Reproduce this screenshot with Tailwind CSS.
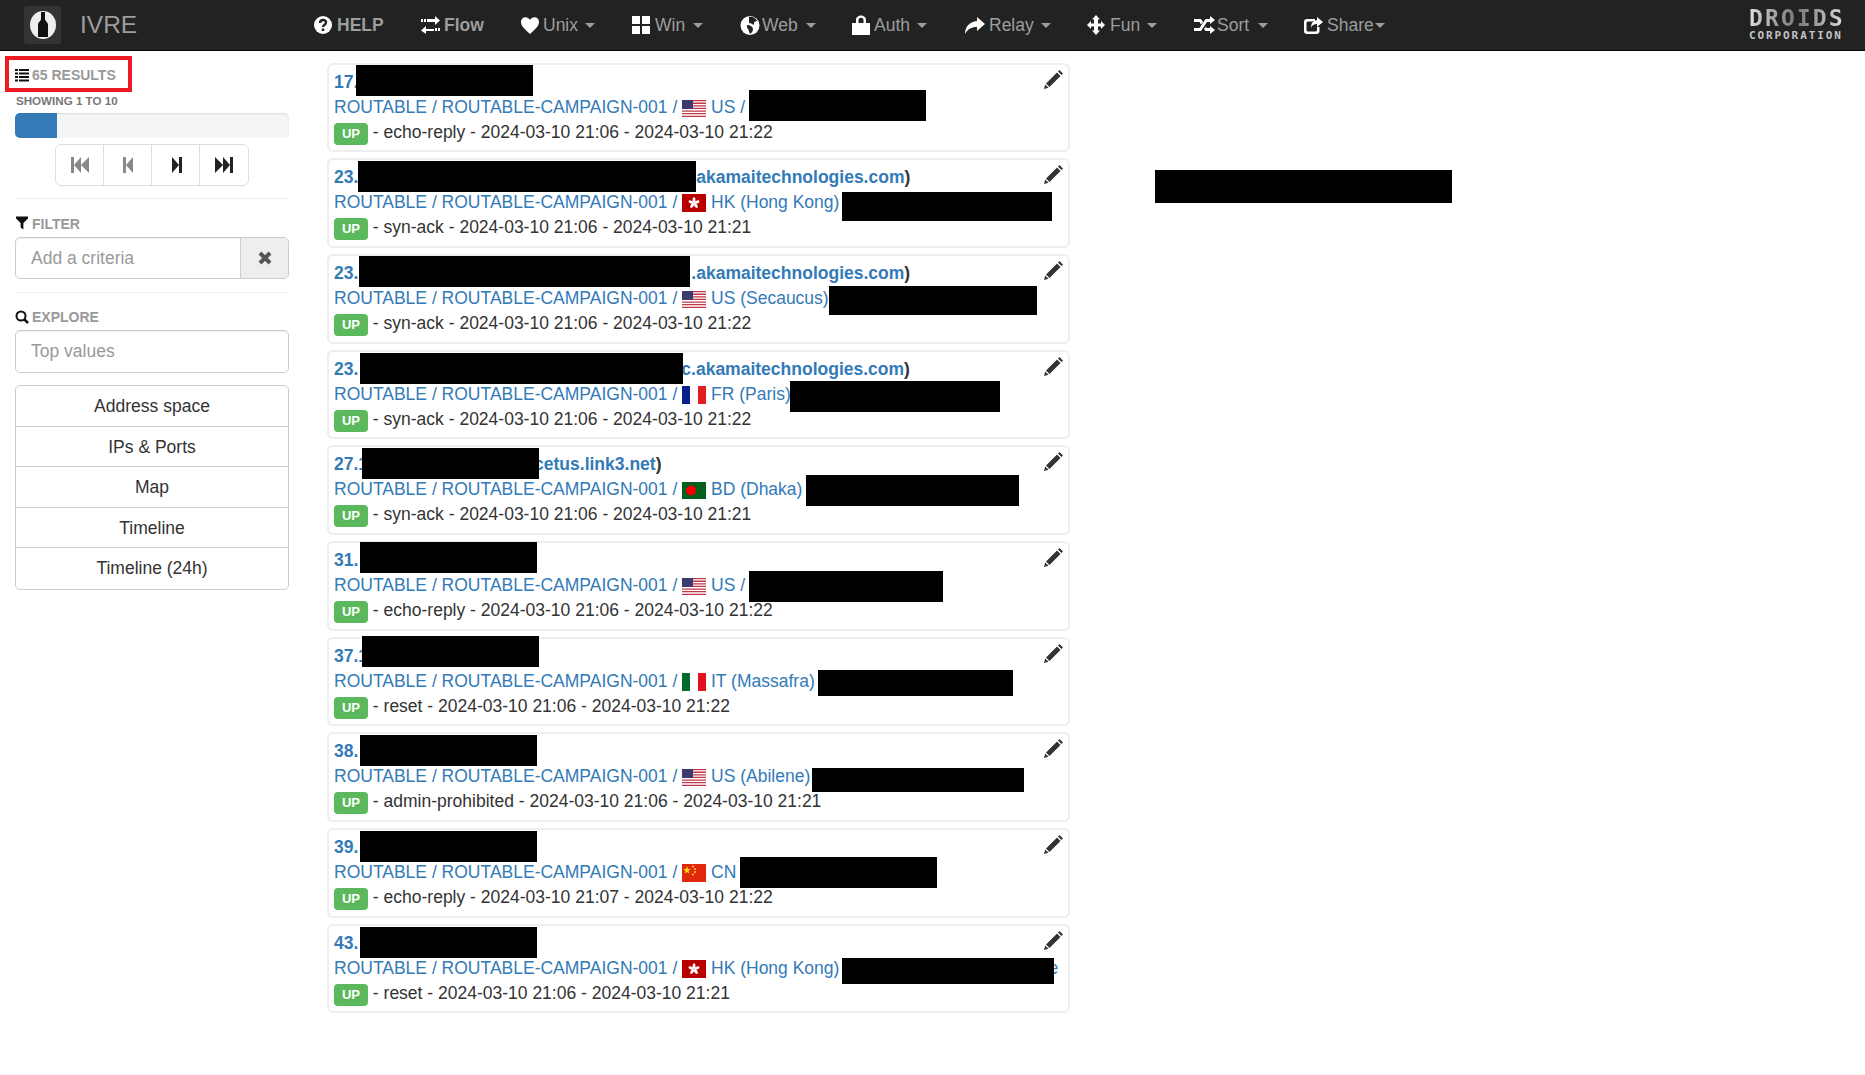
<!doctype html>
<html lang="en">
<head>
<meta charset="utf-8">
<title>IVRE</title>
<script src="https://cdn.jsdelivr.net/npm/@tailwindcss/browser@4"></script>
</head>
<body class="bg-white font-['Liberation_Sans',Arial,sans-serif] text-[17.5px] text-[#333]">
<div class="relative w-[1865px] h-[1075px] overflow-hidden">

<header class="h-[51px] bg-[#222] border-b border-[#080808] flex items-center relative">
  <div class="ml-[24px] w-[37px] h-[38px] rounded-[3px] bg-[#333] flex items-center justify-center">
    <svg width="26" height="28" viewBox="0 0 26 28"><ellipse cx="13" cy="14" rx="13" ry="14" fill="#eee"/><path d="M11 1h4v7c0 2 3 3 3 6v12H8V14c0-3 3-4 3-6z" fill="#111"/></svg>
  </div>
  <div class="ml-[19px] w-[234px] text-[24.5px] text-[#9d9d9d]">IVRE</div>
  <nav class="flex items-center text-[17.5px] text-[#9d9d9d]">
    <a class="w-[107px] flex items-center font-bold">
      <svg class="mr-[5px]" width="18" height="18" viewBox="0 0 18 18"><circle cx="9" cy="9" r="9" fill="#fff"/><path d="M6 7c0-4 6-4 6-.5 0 2.500-3 2.500-3 4.500" fill="none" stroke="#222" stroke-width="2.400"/><rect x="7.800" y="12.500" width="2.500" height="2.500" fill="#222"/></svg>HELP</a>
    <a class="w-[100px] flex items-center font-bold">
      <svg class="mr-[4px]" width="19" height="18" viewBox="0 0 19 18"><path d="M6 3h8V0l5 4.500-5 4.500V6H6zM3 3h2v3H3zM0 3h2v3H0zM13 10v3H5v-3l-5 4.500L5 18v-3h8v-5zM14 12h2v3h-2zM17 12h2v3h-2z" fill="#fff"/></svg>Flow</a>
    <a class="w-[111px] flex items-center">
      <svg class="mr-[4px]" width="18" height="17" viewBox="0 0 18 17"><path d="M9 17C4 12 0 9.500 0 5c0-6 7-6 9-2 2-4 9-4 9 2 0 4.500-4 7-9 12z" fill="#fff"/></svg>Unix<span class="ml-[7px] w-0 h-0 border-x-[5px] border-t-[5px] border-x-transparent border-t-[#9d9d9d]"></span></a>
    <a class="w-[108px] flex items-center">
      <svg class="mr-[5px]" width="18" height="18" viewBox="0 0 18 18"><path d="M0 0h8v8H0zM10 0h8v8h-8zM0 10h8v8H0zM10 10h8v8h-8z" fill="#fff"/></svg>Win<span class="ml-[8px] w-0 h-0 border-x-[5px] border-t-[5px] border-x-transparent border-t-[#9d9d9d]"></span></a>
    <a class="w-[112px] flex items-center">
      <svg class="mr-[2px]" width="20" height="19" viewBox="0 0 20 19"><circle cx="10" cy="9.500" r="9.500" fill="#fff"/><path d="M9 1c3-1 7 1 8 4-1 1-3 0-3 2 1 2-1 2-2 1-1-1-3 0-3-2zM7 9c3 0 6 2 6 4 0 3-2 4-3 5-1-2-1-4-2-5-1-1-1-2-1-4z" fill="#222"/></svg>Web<span class="ml-[8px] w-0 h-0 border-x-[5px] border-t-[5px] border-x-transparent border-t-[#9d9d9d]"></span></a>
    <a class="w-[113px] flex items-center">
      <svg class="mr-[4px]" width="18" height="20" viewBox="0 0 18 20"><path d="M0 8h4V5c0-6 10-6 10 0v3h4v12H0zM6.500 8h5V5c0-3-5-3-5 0z" fill="#fff"/></svg>Auth<span class="ml-[7px] w-0 h-0 border-x-[5px] border-t-[5px] border-x-transparent border-t-[#9d9d9d]"></span></a>
    <a class="w-[122px] flex items-center">
      <svg class="mr-[4px]" width="20" height="17" viewBox="0 0 20 17"><path d="M12 0l8 7-8 7V10C6 10 3 12 0 17c0-7 4-12 12-13z" fill="#fff"/></svg>Relay<span class="ml-[7px] w-0 h-0 border-x-[5px] border-t-[5px] border-x-transparent border-t-[#9d9d9d]"></span></a>
    <a class="w-[107px] flex items-center">
      <svg class="mr-[5px]" width="18" height="20" viewBox="0 0 18 20"><path d="M9 0l4 4.500h-2V8.500h3V6l4 4-4 4v-2.500h-3V15.500h2L9 20l-4-4.500h2V11.500H4V14l-4-4 4-4v2.500h3V4.500H5z" fill="#fff"/></svg>Fun<span class="ml-[7px] w-0 h-0 border-x-[5px] border-t-[5px] border-x-transparent border-t-[#9d9d9d]"></span></a>
    <a class="w-[110px] flex items-center">
      <svg class="mr-[2px]" width="21" height="18" viewBox="0 0 21 18"><path d="M16 0l5 4-5 4V6h-3l-6 9H0v-3h5.500l6-9H16zM0 3h7l2 3-2 2.500L5.500 6H0zM11.500 11l1.500 1h3v-2l5 4-5 4v-3h-4.500L10 13z" fill="#fff"/></svg>Sort<span class="ml-[9px] w-0 h-0 border-x-[5px] border-t-[5px] border-x-transparent border-t-[#9d9d9d]"></span></a>
    <a class="flex items-center">
      <svg class="mr-[4px]" width="19" height="18" viewBox="0 0 19 18"><path d="M3 3h8v2.500H4Q2.500 5.500 2.500 7v7Q2.500 15.500 4 15.500h7.500q1.500 0 1.500-1.500v-3h2.500v4q0 3-3 3H3q-3 0-3-3V6q0-3 3-3z" fill="#fff"/><path d="M13 1l6 5-6 5V8C10 8 8 9 7 12c0-5 2-7 6-8z" fill="#fff"/></svg>Share<span class="ml-[1px] w-0 h-0 border-x-[5px] border-t-[5px] border-x-transparent border-t-[#9d9d9d]"></span></a>
  </nav>
  <div class="absolute left-[1749px] top-[7px] w-[96px] text-[#c4c4c4] font-['DejaVu_Sans_Mono',monospace] font-bold">
    <div class="text-[23px] leading-[22px] tracking-[2.100px] bg-gradient-to-r from-[#ddd] via-[#777] to-[#ddd] bg-clip-text text-transparent">DROIDS</div>
    <div class="text-[11px] leading-[12px] tracking-[1.900px] mt-[1px]">CORPORATION</div>
  </div>
</header>

<div class="flex">
  <aside class="w-[327px] pl-[15px] shrink-0">
    <div class="w-[274px]">
      <div class="h-[49px] flex items-center text-[14px] font-bold text-[#999]">
        <svg class="mr-[3px]" width="14" height="13" viewBox="0 0 14 13"><path d="M0 0h3v2H0zM4 0h10v2H4zM0 3.500h3v2H0zM4 3.500h10v2H4zM0 7h3v2H0zM4 7h10v2H4zM0 10.500h3v2H0zM4 10.500h10v2H4z" fill="#111"/></svg>65 RESULTS
      </div>
      <div class="text-[11.600px] leading-[13px] font-bold text-[#777] pl-px mb-[6px] -mt-[6px]">SHOWING 1 TO 10</div>
      <div class="h-[25px] rounded-[5px] bg-[#f5f5f5] shadow-[inset_0_1px_2px_rgba(0,0,0,0.1)] overflow-hidden">
        <div class="h-full w-[42px] bg-[#337ab7]"></div>
      </div>
      <div class="mt-[6px] ml-[40px] w-[194px] h-[42px] grid grid-cols-4 border border-[#ddd] rounded-[6px] divide-x divide-[#ddd]">
        <div class="flex items-center justify-center"><svg width="18" height="16" viewBox="0 0 18 16"><path d="M0 0h3v16H0zM3 8l7-8v16zM10 8l8-8v16z" fill="#888"/></svg></div>
        <div class="flex items-center justify-center"><svg width="10" height="16" viewBox="0 0 10 16"><path d="M0 0h3v16H0zM3 8l7-8v16z" fill="#888"/></svg></div>
        <div class="flex items-center justify-center"><svg class="ml-[2px]" width="10" height="16" viewBox="0 0 10 16"><path d="M0 0l7 8-7 8zM7 0h3v16H7z" fill="#222"/></svg></div>
        <div class="flex items-center justify-center"><svg width="18" height="16" viewBox="0 0 18 16"><path d="M0 0l8 8-8 8zM8 0l7 8-7 8zM15 0h3v16h-3z" fill="#222"/></svg></div>
      </div>
      <div class="mt-[12px] border-t border-[#eee]"></div>
      <div class="mt-[15px] h-[20px] flex items-center text-[14px] font-bold text-[#999]">
        <svg class="mr-[4px] -mt-[3px] ml-px" width="12" height="14" viewBox="0 0 13 14"><path d="M0 0h13v2L8 7v7l-3-2V7L0 2z" fill="#111"/></svg>FILTER
      </div>
      <div class="mt-[3px] h-[42px] flex border border-[#ccc] rounded-[5px] shadow-[inset_0_1px_1px_rgba(0,0,0,0.075)] overflow-hidden">
        <input class="flex-1 min-w-0 pl-[15px] text-[17.5px] outline-none bg-transparent placeholder:text-[#999]" placeholder="Add a criteria">
        <div class="w-[48px] bg-[#eee] border-l border-[#ccc] flex items-center justify-center">
          <svg width="14" height="14" viewBox="0 0 14 14"><path d="M2 2l10 10M12 2L2 12" stroke="#555" stroke-width="4"/></svg>
        </div>
      </div>
      <div class="mt-[13px] border-t border-[#eee]"></div>
      <div class="mt-[14px] h-[20px] flex items-center text-[14px] font-bold text-[#999]">
        <svg class="mr-[3px]" width="14" height="14" viewBox="0 0 14 14"><circle cx="6" cy="6" r="4.500" fill="none" stroke="#111" stroke-width="2"/><path d="M9 9l4 4" stroke="#111" stroke-width="2.500"/></svg>EXPLORE
      </div>
      <input class="mt-[3px] block w-full h-[43px] border border-[#ccc] rounded-[5px] pl-[15px] text-[17.5px] outline-none placeholder:text-[#999] shadow-[inset_0_1px_1px_rgba(0,0,0,0.075)]" placeholder="Top values">
      <div class="mt-[12px] border border-[#ccc] rounded-[5px] divide-y divide-[#ccc] text-center text-[17.5px] text-[#333]">
        <div class="h-[40.500px] leading-[40px]">Address space</div>
        <div class="h-[40.500px] leading-[40px]">IPs &amp; Ports</div>
        <div class="h-[40.500px] leading-[40px]">Map</div>
        <div class="h-[40.500px] leading-[40px]">Timeline</div>
        <div class="h-[40.500px] leading-[40px]">Timeline (24h)</div>
      </div>
    </div>
  </aside>

  <main class="w-[743px] pt-[11.800px] shrink-0">
    <article class="relative h-[89.670px] mb-[6px] border-2 border-[#eee] rounded-[6px] pl-[5px] pt-[5px] leading-[25px] whitespace-nowrap">
      <svg class="absolute right-[5px] top-[5px]" width="19" height="19" viewBox="0 0 19 19"><use href="#pencil"/></svg>
      <div class="font-bold text-[#337ab7]">17.</div>
      <div class="text-[#337ab7]">ROUTABLE / ROUTABLE-CAMPAIGN-001 / <svg class="inline-block align-[-4px]" width="24" height="17" viewBox="0 0 24 17"><use href="#us"/></svg> US /</div>
      <div><span class="inline-block w-[34px] h-[22px] leading-[22px] rounded-[4px] bg-[#5cb85c] text-white text-[13px] font-bold text-center align-[0px]">UP</span> - echo-reply - 2024-03-10 21:06 - 2024-03-10 21:22</div>
    </article>
    <article class="relative h-[89.670px] mb-[6px] border-2 border-[#eee] rounded-[6px] pl-[5px] pt-[5px] leading-[25px] whitespace-nowrap">
      <svg class="absolute right-[5px] top-[5px]" width="19" height="19" viewBox="0 0 19 19"><use href="#pencil"/></svg>
      <div class="font-bold text-[#337ab7]">23.<span class="inline-block w-[338px]"></span>akamaitechnologies.com<span class="text-[#333]">)</span></div>
      <div class="text-[#337ab7]">ROUTABLE / ROUTABLE-CAMPAIGN-001 / <svg class="inline-block align-[-4px]" width="24" height="18" viewBox="0 0 24 18"><use href="#hk"/></svg> HK (Hong Kong)</div>
      <div><span class="inline-block w-[34px] h-[22px] leading-[22px] rounded-[4px] bg-[#5cb85c] text-white text-[13px] font-bold text-center align-[0px]">UP</span> - syn-ack - 2024-03-10 21:06 - 2024-03-10 21:21</div>
    </article>
    <article class="relative h-[89.670px] mb-[6px] border-2 border-[#eee] rounded-[6px] pl-[5px] pt-[5px] leading-[25px] whitespace-nowrap">
      <svg class="absolute right-[5px] top-[5px]" width="19" height="19" viewBox="0 0 19 19"><use href="#pencil"/></svg>
      <div class="font-bold text-[#337ab7]">23.<span class="inline-block w-[333px]"></span>.akamaitechnologies.com<span class="text-[#333]">)</span></div>
      <div class="text-[#337ab7]">ROUTABLE / ROUTABLE-CAMPAIGN-001 / <svg class="inline-block align-[-4px]" width="24" height="17" viewBox="0 0 24 17"><use href="#us"/></svg> US (Secaucus)</div>
      <div><span class="inline-block w-[34px] h-[22px] leading-[22px] rounded-[4px] bg-[#5cb85c] text-white text-[13px] font-bold text-center align-[0px]">UP</span> - syn-ack - 2024-03-10 21:06 - 2024-03-10 21:22</div>
    </article>
    <article class="relative h-[89.670px] mb-[6px] border-2 border-[#eee] rounded-[6px] pl-[5px] pt-[5px] leading-[25px] whitespace-nowrap">
      <svg class="absolute right-[5px] top-[5px]" width="19" height="19" viewBox="0 0 19 19"><use href="#pencil"/></svg>
      <div class="font-bold text-[#337ab7]">23.<span class="inline-block w-[323px]"></span>c.akamaitechnologies.com<span class="text-[#333]">)</span></div>
      <div class="text-[#337ab7]">ROUTABLE / ROUTABLE-CAMPAIGN-001 / <svg class="inline-block align-[-4px]" width="24" height="18" viewBox="0 0 24 18"><use href="#fr"/></svg> FR (Paris)</div>
      <div><span class="inline-block w-[34px] h-[22px] leading-[22px] rounded-[4px] bg-[#5cb85c] text-white text-[13px] font-bold text-center align-[0px]">UP</span> - syn-ack - 2024-03-10 21:06 - 2024-03-10 21:22</div>
    </article>
    <article class="relative h-[89.670px] mb-[6px] border-2 border-[#eee] rounded-[6px] pl-[5px] pt-[5px] leading-[25px] whitespace-nowrap">
      <svg class="absolute right-[5px] top-[5px]" width="19" height="19" viewBox="0 0 19 19"><use href="#pencil"/></svg>
      <div class="font-bold text-[#337ab7]">27.1<span class="inline-block w-[166px]"></span>cetus.link3.net<span class="text-[#333]">)</span></div>
      <div class="text-[#337ab7]">ROUTABLE / ROUTABLE-CAMPAIGN-001 / <svg class="inline-block align-[-4px]" width="24" height="17" viewBox="0 0 24 17"><use href="#bd"/></svg> BD (Dhaka)</div>
      <div><span class="inline-block w-[34px] h-[22px] leading-[22px] rounded-[4px] bg-[#5cb85c] text-white text-[13px] font-bold text-center align-[0px]">UP</span> - syn-ack - 2024-03-10 21:06 - 2024-03-10 21:21</div>
    </article>
    <article class="relative h-[89.670px] mb-[6px] border-2 border-[#eee] rounded-[6px] pl-[5px] pt-[5px] leading-[25px] whitespace-nowrap">
      <svg class="absolute right-[5px] top-[5px]" width="19" height="19" viewBox="0 0 19 19"><use href="#pencil"/></svg>
      <div class="font-bold text-[#337ab7]">31.</div>
      <div class="text-[#337ab7]">ROUTABLE / ROUTABLE-CAMPAIGN-001 / <svg class="inline-block align-[-4px]" width="24" height="17" viewBox="0 0 24 17"><use href="#us"/></svg> US /</div>
      <div><span class="inline-block w-[34px] h-[22px] leading-[22px] rounded-[4px] bg-[#5cb85c] text-white text-[13px] font-bold text-center align-[0px]">UP</span> - echo-reply - 2024-03-10 21:06 - 2024-03-10 21:22</div>
    </article>
    <article class="relative h-[89.670px] mb-[6px] border-2 border-[#eee] rounded-[6px] pl-[5px] pt-[5px] leading-[25px] whitespace-nowrap">
      <svg class="absolute right-[5px] top-[5px]" width="19" height="19" viewBox="0 0 19 19"><use href="#pencil"/></svg>
      <div class="font-bold text-[#337ab7]">37.1</div>
      <div class="text-[#337ab7]">ROUTABLE / ROUTABLE-CAMPAIGN-001 / <svg class="inline-block align-[-4px]" width="24" height="18" viewBox="0 0 24 18"><use href="#it"/></svg> IT (Massafra)</div>
      <div><span class="inline-block w-[34px] h-[22px] leading-[22px] rounded-[4px] bg-[#5cb85c] text-white text-[13px] font-bold text-center align-[0px]">UP</span> - reset - 2024-03-10 21:06 - 2024-03-10 21:22</div>
    </article>
    <article class="relative h-[89.670px] mb-[6px] border-2 border-[#eee] rounded-[6px] pl-[5px] pt-[5px] leading-[25px] whitespace-nowrap">
      <svg class="absolute right-[5px] top-[5px]" width="19" height="19" viewBox="0 0 19 19"><use href="#pencil"/></svg>
      <div class="font-bold text-[#337ab7]">38.</div>
      <div class="text-[#337ab7]">ROUTABLE / ROUTABLE-CAMPAIGN-001 / <svg class="inline-block align-[-4px]" width="24" height="17" viewBox="0 0 24 17"><use href="#us"/></svg> US (Abilene)</div>
      <div><span class="inline-block w-[34px] h-[22px] leading-[22px] rounded-[4px] bg-[#5cb85c] text-white text-[13px] font-bold text-center align-[0px]">UP</span> - admin-prohibited - 2024-03-10 21:06 - 2024-03-10 21:21</div>
    </article>
    <article class="relative h-[89.670px] mb-[6px] border-2 border-[#eee] rounded-[6px] pl-[5px] pt-[5px] leading-[25px] whitespace-nowrap">
      <svg class="absolute right-[5px] top-[5px]" width="19" height="19" viewBox="0 0 19 19"><use href="#pencil"/></svg>
      <div class="font-bold text-[#337ab7]">39.</div>
      <div class="text-[#337ab7]">ROUTABLE / ROUTABLE-CAMPAIGN-001 / <svg class="inline-block align-[-4px]" width="24" height="18" viewBox="0 0 24 18"><use href="#cn"/></svg> CN</div>
      <div><span class="inline-block w-[34px] h-[22px] leading-[22px] rounded-[4px] bg-[#5cb85c] text-white text-[13px] font-bold text-center align-[0px]">UP</span> - echo-reply - 2024-03-10 21:07 - 2024-03-10 21:22</div>
    </article>
    <article class="relative h-[89.670px] mb-[6px] border-2 border-[#eee] rounded-[6px] pl-[5px] pt-[5px] leading-[25px] whitespace-nowrap">
      <svg class="absolute right-[5px] top-[5px]" width="19" height="19" viewBox="0 0 19 19"><use href="#pencil"/></svg>
      <div class="font-bold text-[#337ab7]">43.</div>
      <div class="text-[#337ab7]">ROUTABLE / ROUTABLE-CAMPAIGN-001 / <svg class="inline-block align-[-4px]" width="24" height="18" viewBox="0 0 24 18"><use href="#hk"/></svg> HK (Hong Kong)<span class="inline-block w-[209px]"></span>e</div>
      <div><span class="inline-block w-[34px] h-[22px] leading-[22px] rounded-[4px] bg-[#5cb85c] text-white text-[13px] font-bold text-center align-[0px]">UP</span> - reset - 2024-03-10 21:06 - 2024-03-10 21:21</div>
    </article>
  </main>
</div>

<!-- annotations painted over the screenshot -->
<div class="absolute left-[5px] top-[56px] w-[127px] h-[36px] border-4 border-[#ed1c24]"></div>
<div class="absolute left-[356px] top-[65px] w-[177px] h-[31px] bg-black"></div>
<div class="absolute left-[749px] top-[90px] w-[177px] h-[31px] bg-black"></div>
<div class="absolute left-[358px] top-[161px] w-[338px] h-[31px] bg-black"></div>
<div class="absolute left-[842px] top-[192px] w-[210px] h-[29px] bg-black"></div>
<div class="absolute left-[359px] top-[256px] w-[331px] h-[31px] bg-black"></div>
<div class="absolute left-[829px] top-[286px] w-[208px] h-[29px] bg-black"></div>
<div class="absolute left-[360px] top-[353px] w-[323px] h-[31px] bg-black"></div>
<div class="absolute left-[790px] top-[381px] w-[210px] h-[31px] bg-black"></div>
<div class="absolute left-[362px] top-[448px] w-[177px] h-[31px] bg-black"></div>
<div class="absolute left-[806px] top-[475px] w-[213px] h-[31px] bg-black"></div>
<div class="absolute left-[360px] top-[542px] w-[177px] h-[31px] bg-black"></div>
<div class="absolute left-[749px] top-[571px] w-[194px] h-[31px] bg-black"></div>
<div class="absolute left-[362px] top-[636px] w-[177px] h-[31px] bg-black"></div>
<div class="absolute left-[818px] top-[670px] w-[195px] h-[26px] bg-black"></div>
<div class="absolute left-[360px] top-[735px] w-[177px] h-[31px] bg-black"></div>
<div class="absolute left-[812px] top-[768px] w-[212px] h-[24px] bg-black"></div>
<div class="absolute left-[360px] top-[831px] w-[177px] h-[31px] bg-black"></div>
<div class="absolute left-[740px] top-[857px] w-[197px] h-[31px] bg-black"></div>
<div class="absolute left-[360px] top-[927px] w-[177px] h-[31px] bg-black"></div>
<div class="absolute left-[842px] top-[958px] w-[212px] h-[26px] bg-black"></div>
<div class="absolute left-[1155px] top-[170px] w-[297px] h-[33px] bg-black"></div>

<svg class="absolute w-0 h-0" aria-hidden="true">
  <defs>
    <g id="pencil"><path d="M15.500 0L19 3.500 17.500 5 14 1.500zM13 2.500L16.500 6 5.500 17 2 13.500zM1.200 14.500L4.500 17.800 0 19z" fill="#333"/></g>
    <g id="us"><rect width="24" height="17" fill="#fff"/><path d="M0 0h24v1.300H0zM0 2.600h24v1.300H0zM0 5.200h24v1.300H0zM0 7.800h24v1.300H0zM0 10.400h24v1.300H0zM0 13h24v1.300H0zM0 15.700h24V17H0z" fill="#c0394b"/><rect width="11" height="9" fill="#3c3b6e"/></g>
    <g id="hk"><rect width="24" height="18" fill="#b90000"/><g fill="#fff" transform="translate(12 9)"><ellipse cy="-3" rx="1.500" ry="2.800"/><ellipse cy="-3" rx="1.500" ry="2.800" transform="rotate(72)"/><ellipse cy="-3" rx="1.500" ry="2.800" transform="rotate(144)"/><ellipse cy="-3" rx="1.500" ry="2.800" transform="rotate(216)"/><ellipse cy="-3" rx="1.500" ry="2.800" transform="rotate(288)"/></g></g>
    <g id="fr"><rect width="8" height="18" fill="#0a1e8c"/><rect x="8" width="8" height="18" fill="#fff"/><rect x="16" width="8" height="18" fill="#e01e24"/></g>
    <g id="bd"><rect width="24" height="17" fill="#045f1c"/><circle cx="9" cy="8.500" r="5" fill="#f40000"/></g>
    <g id="it"><rect width="8" height="18" fill="#04692f"/><rect x="8" width="8" height="18" fill="#fff"/><rect x="16" width="8" height="18" fill="#e0101e"/></g>
    <g id="cn"><rect width="24" height="18" fill="#e0280f"/><path d="M5 2l1 3 3 0-2.500 1.800 1 3L5 8 2.500 9.800l1-3L1 5l3 0z" fill="#ffde00"/><circle cx="11" cy="2.500" r="1" fill="#ffde00"/><circle cx="13" cy="5" r="1" fill="#ffde00"/><circle cx="13" cy="8" r="1" fill="#ffde00"/><circle cx="11" cy="10.500" r="1" fill="#ffde00"/></g>
  </defs>
</svg>
</div>
</body>
</html>
